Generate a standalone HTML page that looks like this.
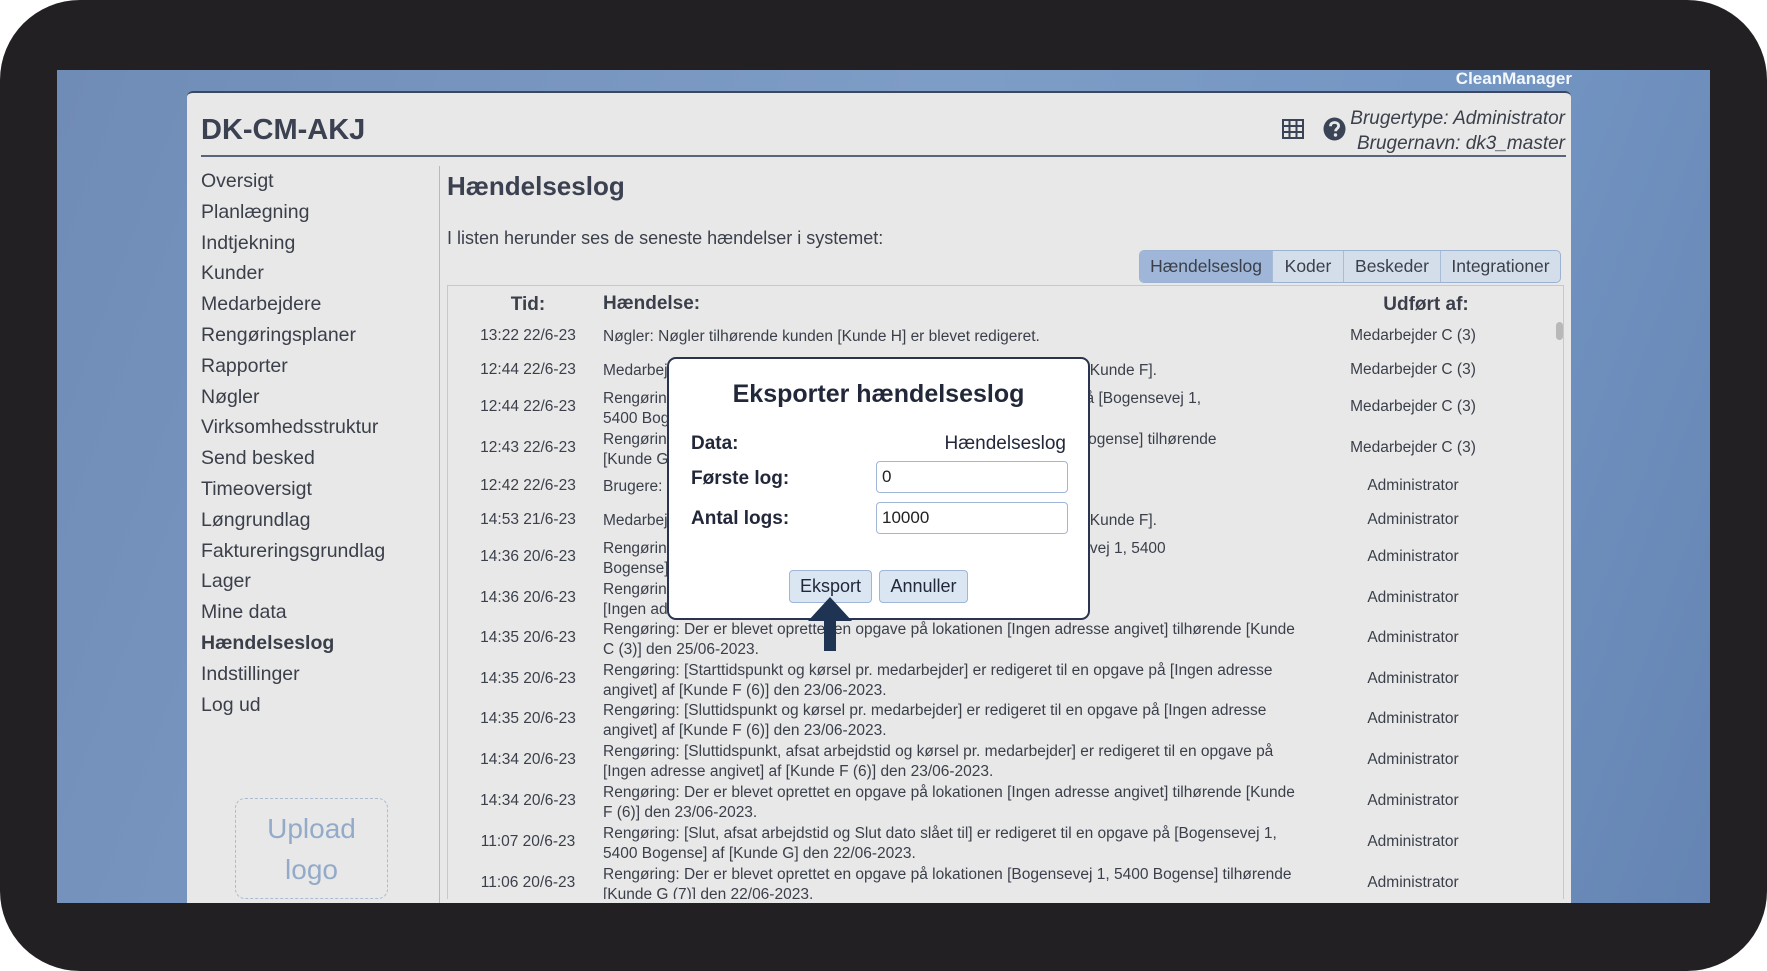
<!DOCTYPE html>
<html><head><meta charset="utf-8">
<style>
*{margin:0;padding:0;box-sizing:border-box}
body{width:1767px;height:971px;background:#fff;font-family:"Liberation Sans",sans-serif;overflow:hidden;position:relative}
.frame{position:absolute;left:0;top:0;width:1767px;height:971px;background:#222022;border-radius:80px}
.blue{position:absolute;left:57px;top:70px;width:1653px;height:833px;background:linear-gradient(110deg,#6f8cb6 0%,#7e9dc6 45%,#7395c2 75%,#6584b3 100%);overflow:hidden}
.cm{position:absolute;left:1440px;top:70px;width:132px;text-align:right;color:#f4f7fb;font-weight:bold;font-size:17px;line-height:17px}
.panel{position:absolute;left:187px;top:91px;width:1384px;height:812px;background:#e8e8e8;border-radius:6px 6px 0 0;border-top:2px solid #3b4860}
.t{position:absolute;white-space:nowrap;color:#3a3f4a}
.title{left:201px;top:114px;font-size:29px;font-weight:bold;color:#3b4150}
.hr{position:absolute;left:201px;top:155px;width:1365px;height:2px;background:#59657a}
.user{position:absolute;right:202px;top:106px;text-align:right;font-style:italic;font-size:19px;line-height:25px;color:#3a3f4a}
.nav{position:absolute;left:201px;top:166px;font-size:19.5px;line-height:30.8px;color:#3a3f4a}
.vdiv{position:absolute;left:439px;top:166px;width:1px;height:737px;background:#b9b9b9}
.tabs{position:absolute;left:1139px;top:250px;height:33px;display:flex;border:1px solid #9bb2d3;border-radius:5px;overflow:hidden;background:#d4deeb}
.tabs div{font-size:17.5px;color:#3a3f4a;line-height:31px;border-left:1px solid #a8bcd8;text-align:center}
.tabs div.a{background:#9fb6d8;border-left:none}
.box{position:absolute;left:447px;top:285px;width:1117px;height:614px;border:1px solid #c8c8c8;border-bottom:none;overflow:hidden}
.row{position:absolute;left:0;width:1117px;font-size:15.5px;color:#3a3f4a;white-space:nowrap}
.row .a{position:absolute;left:30px;width:100px;text-align:center}
.row .b{position:absolute;left:155px;width:760px;line-height:20px}
.row .c{position:absolute;left:885px;width:160px;text-align:center}
.hd{font-weight:bold;font-size:19px}
.sb{position:absolute;left:1108px;top:36px;width:7px;height:18px;border-radius:4px;background:#b8b8b8}
.dlg{position:absolute;left:667px;top:357px;width:423px;height:263px;background:#fff;border:2px solid #2a3450;border-radius:9px}
.dlg .t{color:#22283a}
.inp{position:absolute;left:207px;width:192px;height:32px;border:1px solid #9fb6d8;border-radius:4px;font-size:17px;padding:5px 5px;color:#222}
.btn{position:absolute;top:211px;height:33px;border:1px solid #9fb6d8;border-radius:4px;background:#dbe6f3;font-size:18px;line-height:31px;text-align:center;color:#22283a}
.up{position:absolute;left:235px;top:798px;width:153px;height:101px;border:1px dashed #a9bcd3;border-radius:10px;color:#93abc9;font-size:28px;text-align:center;line-height:41px;padding-top:9px}
</style></head><body>
<div class="frame"></div>
<div class="blue"></div>
<div class="cm">CleanManager</div>
<div class="panel"></div>
<div class="t title">DK-CM-AKJ</div>
<div class="hr"></div>
<svg style="position:absolute;left:1282px;top:119px" width="22" height="20" viewBox="0 0 22 20"><rect x="1" y="1" width="20" height="18" fill="none" stroke="#3a4456" stroke-width="2"/><path d="M1 7H21M1 13H21M7.5 1V19M14.5 1V19" stroke="#3a4456" stroke-width="2"/></svg>
<svg style="position:absolute;left:1323px;top:117px" width="23" height="24" viewBox="0 0 23 24"><ellipse cx="11.5" cy="12" rx="11" ry="11.5" fill="#3a4456"/><path d="M7.5 9.2C7.5 6.8 9.3 5.5 11.6 5.5C14 5.5 15.6 7 15.6 8.9C15.6 11.5 12.6 11.7 12.6 14.2" fill="none" stroke="#e8e8e8" stroke-width="2.8"/><circle cx="12.5" cy="18" r="1.7" fill="#e8e8e8"/></svg>
<div class="user">Brugertype: Administrator<br>Brugernavn: dk3_master</div>
<div class="nav">Oversigt<br>Planlægning<br>Indtjekning<br>Kunder<br>Medarbejdere<br>Rengøringsplaner<br>Rapporter<br>Nøgler<br>Virksomhedsstruktur<br>Send besked<br>Timeoversigt<br>Løngrundlag<br>Faktureringsgrundlag<br>Lager<br>Mine data<br><b>Hændelseslog</b><br>Indstillinger<br>Log ud</div>
<div class="vdiv"></div>
<div class="t" style="left:447px;top:171px;font-size:26px;font-weight:bold;color:#3b4150">Hændelseslog</div>
<div class="t" style="left:447px;top:228px;font-size:18px">I listen herunder ses de seneste hændelser i systemet:</div>
<div class="tabs"><div class="a" style="width:132px">Hændelseslog</div><div style="width:71px">Koder</div><div style="width:97px">Beskeder</div><div style="width:120px">Integrationer</div></div>
<div class="box">
<div class="sb"></div>
<div class="row hd" style="top:8px"><span class="a">Tid:</span><span class="b">Hændelse:</span><span class="c" style="left:898px">Udført af:</span></div>
<div class="row" style="top:41px"><span class="a">13:22 22/6-23</span><span class="b">Nøgler: Nøgler tilhørende kunden [Kunde H] er blevet redigeret.</span><span class="c">Medarbejder C (3)</span></div>
<div class="row" style="top:75px"><span class="a">12:44 22/6-23</span><span class="b">Medarbejder: Medarbejder [Medarbejder C] er blevet tilføjet til kunden [Kunde F].</span><span class="c">Medarbejder C (3)</span></div>
<div class="row" style="top:112px"><span class="a" style="top:0">12:44 22/6-23</span><span class="b" style="top:-9px">Rengøring: [Slut] er redigeret til en opgave på lokationen, en opgave på [Bogensevej 1,<br>5400 Bogense]</span><span class="c">Medarbejder C (3)</span></div>
<div class="row" style="top:153px"><span class="a">12:43 22/6-23</span><span class="b" style="top:-9px">Rengøring: Der er blevet oprettet en opgave på [Bogensevej 1, 5400 Bogense] tilhørende<br>[Kunde G]</span><span class="c">Medarbejder C (3)</span></div>
<div class="row" style="top:191px"><span class="a">12:42 22/6-23</span><span class="b">Brugere: Bruger [dk3_master] har fået ændret rettigheder til lager.</span><span class="c">Administrator</span></div>
<div class="row" style="top:225px"><span class="a">14:53 21/6-23</span><span class="b">Medarbejder: Medarbejder [Medarbejder C] er blevet tilføjet til kunden [Kunde F].</span><span class="c">Administrator</span></div>
<div class="row" style="top:262px"><span class="a">14:36 20/6-23</span><span class="b" style="top:-9px">Rengøring: Der er blevet oprettet en opgave til en opgave på [Bogensevej 1, 5400<br>Bogense]</span><span class="c">Administrator</span></div>
<div class="row" style="top:303px"><span class="a">14:36 20/6-23</span><span class="b" style="top:-9px">Rengøring: [Starttidspunkt] er blevet redigeret til en opgave på<br>[Ingen adresse angivet] af [Kunde F (6)]</span><span class="c">Administrator</span></div>
<div class="row" style="top:343px"><span class="a">14:35 20/6-23</span><span class="b" style="top:-9px">Rengøring: Der er blevet oprettet en opgave på lokationen [Ingen adresse angivet] tilhørende [Kunde<br>C (3)] den 25/06-2023.</span><span class="c">Administrator</span></div>
<div class="row" style="top:384px"><span class="a">14:35 20/6-23</span><span class="b" style="top:-9px">Rengøring: [Starttidspunkt og kørsel pr. medarbejder] er redigeret til en opgave på [Ingen adresse<br>angivet] af [Kunde F (6)] den 23/06-2023.</span><span class="c">Administrator</span></div>
<div class="row" style="top:424px"><span class="a">14:35 20/6-23</span><span class="b" style="top:-9px">Rengøring: [Sluttidspunkt og kørsel pr. medarbejder] er redigeret til en opgave på [Ingen adresse<br>angivet] af [Kunde F (6)] den 23/06-2023.</span><span class="c">Administrator</span></div>
<div class="row" style="top:465px"><span class="a">14:34 20/6-23</span><span class="b" style="top:-9px">Rengøring: [Sluttidspunkt, afsat arbejdstid og kørsel pr. medarbejder] er redigeret til en opgave på<br>[Ingen adresse angivet] af [Kunde F (6)] den 23/06-2023.</span><span class="c">Administrator</span></div>
<div class="row" style="top:506px"><span class="a">14:34 20/6-23</span><span class="b" style="top:-9px">Rengøring: Der er blevet oprettet en opgave på lokationen [Ingen adresse angivet] tilhørende [Kunde<br>F (6)] den 23/06-2023.</span><span class="c">Administrator</span></div>
<div class="row" style="top:547px"><span class="a">11:07 20/6-23</span><span class="b" style="top:-9px">Rengøring: [Slut, afsat arbejdstid og Slut dato slået til] er redigeret til en opgave på [Bogensevej 1,<br>5400 Bogense] af [Kunde G] den 22/06-2023.</span><span class="c">Administrator</span></div>
<div class="row" style="top:588px"><span class="a">11:06 20/6-23</span><span class="b" style="top:-9px">Rengøring: Der er blevet oprettet en opgave på lokationen [Bogensevej 1, 5400 Bogense] tilhørende<br>[Kunde G (7)] den 22/06-2023.</span><span class="c">Administrator</span></div>
</div>
<div class="up">Upload<br>logo</div>
<div class="dlg">
<div class="t" style="left:0;width:419px;text-align:center;top:21px;font-size:25px;font-weight:bold">Eksporter hændelseslog</div>
<div class="t" style="left:22px;top:74px;font-size:19px;font-weight:bold">Data:</div>
<div class="t" style="right:22px;top:74px;font-size:19px">Hændelseslog</div>
<div class="t" style="left:22px;top:109px;font-size:19px;font-weight:bold">Første log:</div>
<div class="inp" style="top:102px">0</div>
<div class="t" style="left:22px;top:149px;font-size:19px;font-weight:bold">Antal logs:</div>
<div class="inp" style="top:143px">10000</div>
<div class="btn" style="left:120px;width:83px">Eksport</div>
<div class="btn" style="left:210px;width:89px">Annuller</div>
</div>
<svg style="position:absolute;left:805px;top:595px" width="50" height="58" viewBox="0 0 50 58"><path d="M25 2L47 26H31V56H19V26H3Z" fill="#1f3352"/></svg>
</body></html>
